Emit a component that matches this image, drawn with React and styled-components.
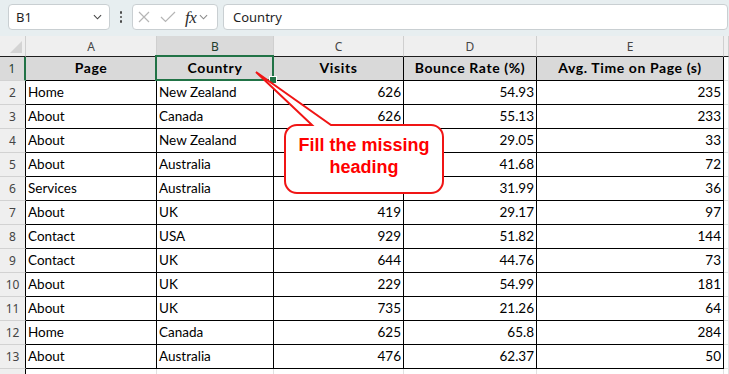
import React from 'react';
import styled, { createGlobalStyle } from 'styled-components';

const GlobalStyle = createGlobalStyle`
  html, body { margin: 0; padding: 0; background: #fff; }
  body { overflow: hidden; }
  *, *::before, *::after { box-sizing: border-box; }
`;

const GREEN = '#217346';

const Root = styled.div`
  position: relative;
  width: 729px;
  height: 374px;
  overflow: hidden;
  background: #fff;
`;

const FormulaBar = styled.div`
  height: 36px;
  background: #e7eef0;
  display: flex;
  align-items: flex-start;
  padding: 4px 1px 0 8px;
`;

const Box = styled.div`
  height: 26px;
  background: #fff;
  border: 1px solid #c9cfd2;
  border-radius: 4px;
  display: flex;
  align-items: center;
  font-family: "Noto Sans", sans-serif;
  font-size: 13px;
  color: #1f1f1f;
`;

const NameBox = styled(Box)`
  width: 102px;
  padding: 0 7px 0 7px;
  justify-content: space-between;
`;

const Dots = styled.div`
  width: 22px;
  height: 26px;
  display: flex;
  flex-direction: column;
  align-items: center;
  justify-content: center;
  gap: 2px;
  span {
    width: 2.5px;
    height: 2.5px;
    border-radius: 50%;
    background: #4a4a4a;
  }
`;

const FxBox = styled(Box)`
  width: 86px;
  padding-left: 5px;
`;

const IconSlot = styled.span`
  display: inline-flex;
  margin-left: ${(p) => p.$ml || 0}px;
`;

const FxText = styled.span`
  margin-left: 9px;
  font-family: "Liberation Serif", serif;
  font-style: italic;
  font-size: 17px;
  color: #2b2b2b;
  line-height: 1;
  letter-spacing: -0.5px;
`;

const FormulaInput = styled(Box)`
  flex: 1;
  margin-left: 5px;
  padding-left: 9px;
`;

const Sheet = styled.div`
  display: grid;
  grid-template-columns: 26px 131px 117px 130px 133px 187px 1fr;
  grid-template-rows: 21px;
  grid-auto-rows: 24px;
`;

const Corner = styled.div`
  position: relative;
  background: #efefef;
  border-right: 1px solid #cfcfcf;
  border-bottom: 1px solid #1e1e1e;
  &::after {
    content: '';
    position: absolute;
    right: 3px;
    bottom: 3px;
    border-style: solid;
    border-width: 0 0 12px 12px;
    border-color: transparent transparent #d4d4d4 transparent;
  }
`;

const ColHead = styled.div`
  background: ${(p) => (p.$active ? '#dadada' : '#efefef')};
  border-right: 1px solid #cfcfcf;
  border-bottom: ${(p) => (p.$active ? `2px solid ${GREEN}` : '1px solid #1e1e1e')};
  display: flex;
  align-items: center;
  justify-content: center;
  padding-top: 1px;
  font-family: "Noto Sans", sans-serif;
  font-size: 12px;
  color: ${(p) => (p.$active ? '#1f3d2c' : '#444')};
`;

const RowHead = styled.div`
  background: ${(p) => (p.$active ? '#dadada' : '#efefef')};
  border-right: ${(p) => (p.$active ? `2px solid ${GREEN}` : '1px solid #000')};
  border-bottom: 1px solid #d2d2d2;
  display: flex;
  align-items: flex-end;
  justify-content: center;
  padding-bottom: 3px;
  font-family: "Noto Sans", sans-serif;
  font-size: 12px;
  line-height: 16px;
  color: ${(p) => (p.$active ? '#1f3d2c' : '#444')};
`;

const Cell = styled.div`
  position: relative;
  border-right: 1px solid ${(p) => (p.$plain ? '#e1e1e1' : '#000')};
  border-bottom: 1px solid ${(p) => (p.$plain ? '#e1e1e1' : '#000')};
  background: ${(p) => (p.$head ? '#d9d9d9' : 'transparent')};
  display: flex;
  align-items: flex-end;
  justify-content: ${(p) => (p.$head ? 'center' : p.$num ? 'flex-end' : 'flex-start')};
  padding: 0 2px 4px 2px;
  font-family: Lato, "Liberation Sans", sans-serif;
  font-size: ${(p) => (p.$head ? '14px' : '13.5px')};
  letter-spacing: ${(p) => (p.$head ? '0.6px' : '0')};
  line-height: 16px;
  font-weight: ${(p) => (p.$head ? 700 : 400)};
  color: #000;
  white-space: nowrap;
`;

const SelectionFrame = styled.div`
  position: absolute;
  left: -2px;
  top: -2px;
  right: -1px;
  bottom: -1px;
  border: 2px solid ${GREEN};
  z-index: 2;
  pointer-events: none;
  &::after {
    content: '';
    position: absolute;
    right: -4px;
    bottom: -4px;
    width: 6px;
    height: 6px;
    background: ${GREEN};
    outline: 1px solid #fff;
  }
`;

const CalloutShape = styled.svg`
  position: absolute;
  left: 0;
  top: 0;
  z-index: 5;
  pointer-events: none;
`;

const CalloutText = styled.div`
  position: absolute;
  left: 285px;
  top: 125px;
  width: 158px;
  height: 68px;
  z-index: 6;
  display: flex;
  flex-direction: column;
  align-items: center;
  justify-content: center;
  padding-bottom: 6px;
  font-family: "Liberation Sans", Arial, sans-serif;
  font-weight: 700;
  font-size: 18px;
  line-height: 22px;
  color: #ff0000;
  text-align: center;
`;

const headers = ['Page', 'Country', 'Visits', 'Bounce Rate (%)', 'Avg. Time on Page (s)'];
const rows = [
  ['Home', 'New Zealand', 626, '54.93', 235],
  ['About', 'Canada', 626, '55.13', 233],
  ['About', 'New Zealand', '', '29.05', 33],
  ['About', 'Australia', '', '41.68', 72],
  ['Services', 'Australia', '', '31.99', 36],
  ['About', 'UK', 419, '29.17', 97],
  ['Contact', 'USA', 929, '51.82', 144],
  ['Contact', 'UK', 644, '44.76', 73],
  ['About', 'UK', 229, '54.99', 181],
  ['About', 'UK', 735, '21.26', 64],
  ['Home', 'Canada', 625, '65.8', 284],
  ['About', 'Australia', 476, '62.37', 50],
];
const letters = ['A', 'B', 'C', 'D', 'E'];

const Chevron = ({ color = '#444', w = 9 }) => (
  <svg width={w} height="6" viewBox="0 0 10 6" fill="none">
    <polyline points="1,1 5,5 9,1" stroke={color} strokeWidth="1.2" />
  </svg>
);

export default function App() {
  return (
    <Root>
      <GlobalStyle />
      <FormulaBar>
        <NameBox>
          <span>B1</span>
          <Chevron />
        </NameBox>
        <Dots>
          <span />
          <span />
          <span />
        </Dots>
        <FxBox>
          <IconSlot>
            <svg width="12" height="12" viewBox="0 0 12 12">
              <path d="M1 1 L11 11 M11 1 L1 11" stroke="#b5b5b5" strokeWidth="1.2" />
            </svg>
          </IconSlot>
          <IconSlot $ml={10}>
            <svg width="16" height="12" viewBox="0 0 16 12" fill="none">
              <polyline points="1,6 5.5,10.5 15,1" stroke="#b5b5b5" strokeWidth="1.2" />
            </svg>
          </IconSlot>
          <FxText>fx</FxText>
          <IconSlot $ml={3}>
            <Chevron color="#8a8a8a" />
          </IconSlot>
        </FxBox>
        <FormulaInput>Country</FormulaInput>
      </FormulaBar>

      <Sheet>
        <Corner />
        {letters.map((l) => (
          <ColHead key={l} $active={l === 'B'}>{l}</ColHead>
        ))}
        <ColHead />

        <RowHead $active>1</RowHead>
        {headers.map((h, i) => (
          <Cell key={h} $head>
            {h}
            {i === 1 && <SelectionFrame />}
          </Cell>
        ))}
        <Cell $plain />

        {rows.map((r, ri) => (
          <React.Fragment key={ri}>
            <RowHead>{ri + 2}</RowHead>
            {r.map((v, ci) => (
              <Cell key={ci} $num={ci >= 2}>{v}</Cell>
            ))}
            <Cell $plain />
          </React.Fragment>
        ))}

        <RowHead />
        {letters.map((l) => (
          <Cell key={l} $plain />
        ))}
        <Cell $plain />
      </Sheet>

      <CalloutShape width="729" height="374" viewBox="0 0 729 374">
        <path
          d="M297 125 L312 125 L256 72 L331 125 L431 125 A12 12 0 0 1 443 137 L443 181 A12 12 0 0 1 431 193 L297 193 A12 12 0 0 1 285 181 L285 137 A12 12 0 0 1 297 125 Z"
          fill="#fff"
          stroke="#f01515"
          strokeWidth="2"
          strokeLinejoin="miter"
        />
      </CalloutShape>
      <CalloutText>
        <span>Fill the missing</span>
        <span>heading</span>
      </CalloutText>
    </Root>
  );
}
